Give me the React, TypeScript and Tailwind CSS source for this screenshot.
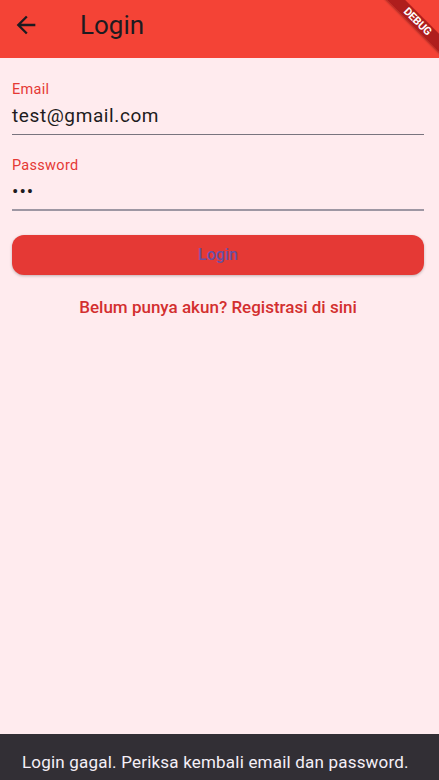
function DebugBanner() {
  return (
    <div className="pointer-events-none absolute right-0 top-0 h-[60px] w-[60px] overflow-hidden">
      <div className="absolute right-[-29px] top-[15px] h-[13px] w-[101px] rotate-45 bg-[#a71b1b]/90 text-center text-[11px] font-bold leading-[13px] tracking-[-0.2px] text-white shadow-[0_1px_2px_rgba(0,0,0,0.3)]">
        DEBUG
      </div>
    </div>
  )
}

function BackArrow() {
  return (
    <svg viewBox="0 0 24 24" className="h-[28px] w-[28px]" fill="#1d1b20">
      <path d="M20 11H7.83l5.59-5.59L12 4l-8 8 8 8 1.41-1.41L7.83 13H20v-2z" />
    </svg>
  )
}

function Field({ label, value, secure }: { label: string; value: string; secure?: boolean }) {
  return (
    <div className="flex flex-col">
      <span className="text-[14.5px] leading-[18px] tracking-[0.3px] text-[#e53935]">{label}</span>
      <div className="mt-[3px] flex h-[28px] items-center">
        {secure ? (
          <span className="text-[19px] tracking-[1px] text-[#1d1b20]">•••</span>
        ) : (
          <span className="text-[19px] tracking-[0.6px] text-[#1d1b20]">{value}</span>
        )}
      </div>
      <div className={secure ? 'mt-[3px] h-[2px] bg-[#9e97a3]' : 'mt-[4px] h-px bg-[#79747e]'} />
    </div>
  )
}

export default function App() {
  return (
    <div className="relative flex h-[780px] w-[439px] flex-col overflow-hidden bg-[#ffebee] font-['Roboto',sans-serif]">
      <header className="relative flex h-[58px] shrink-0 items-start bg-[#f44336] pl-[12px] pt-[11px]">
        <BackArrow />
        <h1 className="ml-[40px] mt-[-4px] text-[26px] leading-[36px] text-[#1d1b20]">Login</h1>
        <DebugBanner />
      </header>

      <main className="flex flex-1 flex-col pl-[12px] pr-[15px] pt-[23px]">
        <Field label="Email" value="test@gmail.com" />
        <div className="mt-[22px]">
          <Field label="Password" value="abc" secure />
        </div>
        <button className="mt-[24px] h-[40px] w-full rounded-[12px] bg-[#e53935] text-[16px] font-medium text-[#6750a4] shadow-[0_1px_3px_rgba(0,0,0,0.25)]">
          Login
        </button>
        <p className="mt-[20px] text-center text-[17px] font-medium leading-[24px] text-[#d32f2f]">
          Belum punya akun? Registrasi di sini
        </p>
      </main>

      <div className="flex h-[46px] shrink-0 items-center bg-[#322f35] px-[22px] pt-[12px]">
        <span className="text-[17px] tracking-[0.2px] text-[#f5eff7]">
          Login gagal. Periksa kembali email dan password.
        </span>
      </div>
    </div>
  )
}
